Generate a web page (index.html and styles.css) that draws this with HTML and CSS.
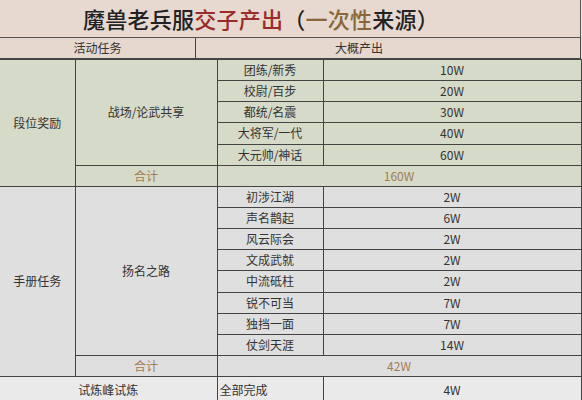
FILE: index.html
```html
<!DOCTYPE html>
<html lang="zh">
<head>
<meta charset="utf-8">
<link rel="stylesheet" href="styles.css">
</head>
<body>
<div class="sheet">
  <div class="title"><span class="black">魔兽老兵服</span><span class="red">交子产出</span><span class="black">（</span><span class="brown">一次性</span><span class="black">来源）</span></div>
  <div class="head">
    <div class="head-a">活动任务</div>
    <div class="head-b">大概产出</div>
  </div>
  <table class="grid">
    <colgroup>
      <col class="c0"><col class="c1"><col class="c2"><col class="c3">
    </colgroup>
    <tbody class="sec1">
      <tr><td rowspan="6" class="first">段位奖励</td><td rowspan="5">战场/论武共享</td><td>团练/新秀</td><td>10W</td></tr>
      <tr><td>校尉/百步</td><td>20W</td></tr>
      <tr><td>都统/名震</td><td>30W</td></tr>
      <tr><td>大将军/一代</td><td>40W</td></tr>
      <tr><td>大元帅/神话</td><td>60W</td></tr>
      <tr class="sum"><td>合计</td><td colspan="2">160W</td></tr>
    </tbody>
    <tbody class="sec2">
      <tr><td rowspan="9" class="first">手册任务</td><td rowspan="8">扬名之路</td><td>初涉江湖</td><td>2W</td></tr>
      <tr><td>声名鹊起</td><td>6W</td></tr>
      <tr><td>风云际会</td><td>2W</td></tr>
      <tr><td>文成武就</td><td>2W</td></tr>
      <tr><td>中流砥柱</td><td>2W</td></tr>
      <tr><td>锐不可当</td><td>7W</td></tr>
      <tr><td>独挡一面</td><td>7W</td></tr>
      <tr><td>仗剑天涯</td><td>14W</td></tr>
      <tr class="sum"><td>合计</td><td colspan="2">42W</td></tr>
    </tbody>
    <tbody class="sec3">
      <tr class="last"><td colspan="2" class="first">试炼峰试炼</td><td class="left">全部完成</td><td>4W</td></tr>
    </tbody>
  </table>
</div>
</body>
</html>
```

FILE: styles.css
```css
html, body {
  margin: 0;
  padding: 0;
  background: #e6e6e6;
}
.sheet {
  width: 582px;
  font-family: "Noto Sans CJK SC", "Noto Sans", sans-serif;
  color: #333;
  font-size: 12px;
}
.title {
  height: 38px;
  box-sizing: border-box;
  border-bottom: 1px solid #555;
  border-right: 1px solid #555;
  width: 581px;
  background: #e7d9d0;
  padding-left: 83px;
  font-size: 22px;
  line-height: 37px;
  font-weight: 500;
  white-space: nowrap;
  letter-spacing: 0.25px;
}
.black { color: #222; }
.red { color: #9a2a2c; }
.brown { color: #8a6638; }
.head {
  display: flex;
  width: 581px;
  height: 21px;
  box-sizing: border-box;
  border-bottom: 1px solid #444;
  border-right: 1px solid #444;
  background: #e6d8cf;
  line-height: 20px;
}
.head-a {
  width: 195px;
  text-align: center;
  border-right: 1px solid #444;
}
.head-b {
  flex: 1;
  text-align: center;
  padding-right: 58px;
}
.grid {
  border-collapse: collapse;
  table-layout: fixed;
  width: 581px;
}
.c0 { width: 75px; }
.c1 { width: 142px; }
.c2 { width: 106px; }
.c3 { width: 258px; }
.grid td {
  border: 1px solid #444;
  text-align: center;
  padding: 0;
  height: 20px;
  line-height: 18px;
  white-space: nowrap;
  overflow: hidden;
}
.grid tr { height: 21.15px; }
.grid td.first { border-left: none; }
.sec1 td { background: #d6dac8; }
.sec2 td { background: #dfdfdf; }
.sec3 td { background: #eaeaea; }
.sum td { color: #a27c55; }
.last { height: 26px; }
.grid .last td { height: 25px; border-bottom: none; }
.grid td.left { text-align: left; padding-left: 2px; }
```
